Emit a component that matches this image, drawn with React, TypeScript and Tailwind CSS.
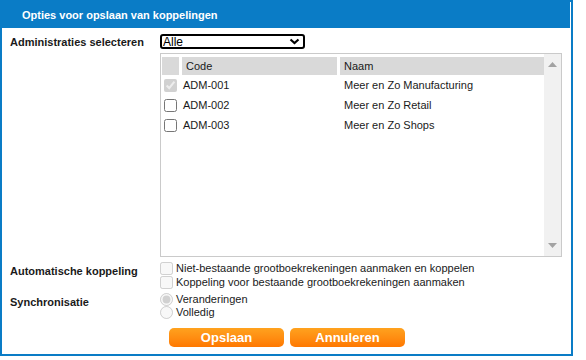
import React from 'react';

const rows = [
  { code: 'ADM-001', name: 'Meer en Zo Manufacturing', checked: true, disabled: true },
  { code: 'ADM-002', name: 'Meer en Zo Retail', checked: false, disabled: false },
  { code: 'ADM-003', name: 'Meer en Zo Shops', checked: false, disabled: false },
];

const App = () => {
  return (
    <div className="w-[586px] h-[360px] bg-white font-['Liberation_Sans',Arial,sans-serif] text-[#1a1a1a]">
      <div className="w-[573px] h-[356px] border-2 border-[#0a7cc6] flex flex-col">
        <div className="h-[26px] mr-px bg-[#0a7cc6] flex items-center pl-5 text-[11px] font-bold text-white">
          Opties voor opslaan van koppelingen
        </div>

        <div className="grid grid-cols-[150px_1fr] pl-2 pt-[6px] text-[11px]">
          {/* administraties */}
          <div className="flex items-center h-[15px] font-bold pt-px">Administraties selecteren</div>
          <div>
            <div className="w-[145px] h-[15px] border-2 border-black rounded-[3px] flex items-center justify-between pl-px pr-[3px] text-[12px] leading-none text-black">
              <span>Alle</span>
              <svg width="11" height="7" viewBox="0 0 11 7">
                <polyline points="1.5,1.5 5.5,5 9.5,1.5" fill="none" stroke="#000" strokeWidth="2.2" />
              </svg>
            </div>

            <div className="mt-[4px] w-[402px] h-[204px] border border-[#cacaca] flex">
              <div className="flex-1 pl-px pt-[3px]">
                <div className="flex h-[18px] gap-[3px] text-[11px]">
                  <div className="w-[17px] bg-[#d9d9d9]" />
                  <div className="w-[155px] bg-[#d9d9d9] flex items-center pl-1">Code</div>
                  <div className="flex-1 bg-[#d9d9d9] flex items-center pl-1">Naam</div>
                </div>
                {rows.map(r => (
                  <div key={r.code} className="flex h-[20px] items-center gap-[3px]">
                    <div className="w-[17px] flex items-center justify-center">
                      <input
                        type="checkbox"
                        defaultChecked={r.checked}
                        disabled={r.disabled}
                        className="w-[13px] h-[13px]"
                      />
                    </div>
                    <div className="w-[155px] pl-px">{r.code}</div>
                    <div className="flex-1 pl-1">{r.name}</div>
                  </div>
                ))}
              </div>
              <div className="w-[17px] bg-[#f1f1f1] flex flex-col justify-between items-center py-[8px]">
                <svg width="9" height="5" viewBox="0 0 9 5">
                  <polygon points="0,5 9,5 4.5,0" fill="#a3a3a3" />
                </svg>
                <svg width="9" height="5" viewBox="0 0 9 5">
                  <polygon points="0,0 9,0 4.5,5" fill="#a3a3a3" />
                </svg>
              </div>
            </div>
          </div>

          {/* automatische koppeling */}
          <div className="mt-[4px] pt-[3px] font-bold leading-[14px]">Automatische koppeling</div>
          <div className="mt-[4px] flex flex-col leading-[14px]">
            <label className="flex items-center h-[14px] gap-[3px]">
              <input type="checkbox" disabled className="w-[13px] h-[13px]" />
              <span>Niet-bestaande grootboekrekeningen aanmaken en koppelen</span>
            </label>
            <label className="flex items-center h-[14px] gap-[3px]">
              <input type="checkbox" disabled className="w-[13px] h-[13px]" />
              <span>Koppeling voor bestaande grootboekrekeningen aanmaken</span>
            </label>
          </div>

          {/* synchronisatie */}
          <div className="mt-[4px] pt-[2px] font-bold leading-[14px]">Synchronisatie</div>
          <div className="mt-[4px] flex flex-col leading-[13px]">
            <label className="flex items-center h-[13px] gap-[3px]">
              <input type="radio" name="sync" defaultChecked disabled className="w-[13px] h-[13px]" />
              <span>Veranderingen</span>
            </label>
            <label className="flex items-center h-[13px] gap-[3px]">
              <input type="radio" name="sync" disabled className="w-[13px] h-[13px]" />
              <span>Volledig</span>
            </label>
          </div>

          {/* buttons */}
          <div />
          <div className="mt-[9px] ml-[9px] flex gap-[6px]">
            <button className="w-[115px] h-[19px] rounded-[5px] bg-linear-to-b from-[#ffa21e] to-[#ff7800] text-white font-bold text-[13px] leading-none">
              Opslaan
            </button>
            <button className="w-[115px] h-[19px] rounded-[5px] bg-linear-to-b from-[#ffa21e] to-[#ff7800] text-white font-bold text-[13px] leading-none">
              Annuleren
            </button>
          </div>
        </div>
      </div>
    </div>
  );
};

export default App;
